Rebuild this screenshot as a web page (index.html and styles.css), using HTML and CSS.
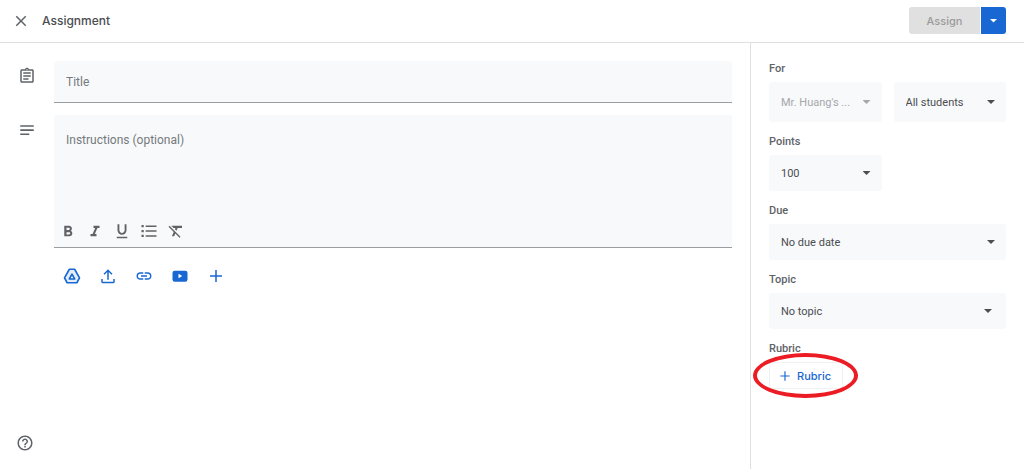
FILE: index.html
```html
<!DOCTYPE html>
<html lang="en">
<head>
  <meta charset="UTF-8">
  <meta name="viewport" content="width=device-width, initial-scale=1.0">
  <title>Assignment</title>
  <link rel="stylesheet" href="styles.css">
</head>
<body>
  <header class="topbar">
    <button class="icon-btn close" aria-label="Close">
      <svg width="18" height="18" viewBox="0 0 24 24"><path d="M19 6.41 17.59 5 12 10.59 6.41 5 5 6.41 10.59 12 5 17.59 6.41 19 12 13.41 17.59 19 19 17.59 13.41 12z"/></svg>
    </button>
    <h1 class="page-title">Assignment</h1>
    <div class="assign">
      <button class="assign-btn" disabled>Assign</button>
      <button class="assign-more" aria-label="More options"><span class="arrow"></span></button>
    </div>
  </header>

  <div class="layout">
    <main class="editor">
      <div class="row">
        <svg class="row-icon" width="18" height="18" viewBox="0 0 24 24"><path d="M7 15h7v2H7zm0-4h10v2H7zm0-4h10v2H7zm12-4h-4.18C14.4 1.84 13.3 1 12 1s-2.4.84-2.82 2H5c-1.1 0-2 .9-2 2v14c0 1.1.9 2 2 2h14c1.1 0 2-.9 2-2V5c0-1.1-.9-2-2-2zm-7-.25c.41 0 .75.34.75.75s-.34.75-.75.75-.75-.34-.75-.75.34-.75.75-.75zM19 19H5V5h14v14z"/></svg>
        <input class="field title-input" type="text" placeholder="Title" aria-label="Title">
      </div>

      <div class="row">
        <svg class="row-icon" width="18" height="18" viewBox="0 0 24 24"><path d="M3 5.500h18v2.200H3zM3 11h18v2.200H3zM3 16.500h12v2.200H3z"/></svg>
        <div class="field instructions">
          <textarea class="instructions-input" placeholder="Instructions (optional)" aria-label="Instructions (optional)"></textarea>
          <div class="toolbar">
            <button class="icon-btn" aria-label="Bold">
              <svg width="18" height="18" viewBox="0 0 24 24"><path d="M15.6 11.8c1-.7 1.6-1.8 1.6-2.8 0-2.26-1.75-4-4-4H7v14h7.04c2.09 0 3.71-1.7 3.71-3.79 0-1.52-.86-2.82-2.15-3.41zM10 7.5h3c.83 0 1.5.67 1.5 1.5s-.67 1.5-1.5 1.5h-3v-3zm3.5 9H10v-3h3.5c.83 0 1.5.67 1.5 1.5s-.67 1.5-1.5 1.5z"/></svg>
            </button>
            <button class="icon-btn" aria-label="Italic">
              <svg width="18" height="18" viewBox="0 0 24 24"><path d="M10 5v3h2.210l-3.420 8H6v3h8v-3h-2.210l3.420-8H18V5z"/></svg>
            </button>
            <button class="icon-btn" aria-label="Underline">
              <svg width="18" height="18" viewBox="0 0 24 24"><path d="M12 17c3.310 0 6-2.690 6-6V3h-2.500v8c0 1.930-1.570 3.500-3.500 3.500S8.500 12.930 8.500 11V3H6v8c0 3.310 2.690 6 6 6zM5 19.500v2h14v-2z"/></svg>
            </button>
            <button class="icon-btn" aria-label="Bulleted list">
              <svg width="18" height="18" viewBox="0 0 24 24"><path d="M2 4h3v3H2zM2 10.500h3v3H2zM2 17h3v3H2zM7.500 4.500H22v2H7.500zM7.500 11H22v2H7.500zM7.500 17.500H22v2H7.500z"/></svg>
            </button>
            <button class="icon-btn" aria-label="Remove formatting">
              <svg width="18" height="18" viewBox="0 0 24 24"><path d="M3.270 5 2 6.270l6.970 6.970L6.500 19h3l1.570-3.660L16.730 21 18 19.730 3.550 5.270 3.270 5zM6 5v.180L8.820 8h2.400l-.720 1.680 2.100 2.100L14.210 8H20V5H6z"/></svg>
            </button>
          </div>
        </div>
      </div>

      <div class="attach">
        <button class="icon-btn" aria-label="Google Drive">
          <svg width="18" height="18" viewBox="0 0 24 24"><path fill="#e3edfb" stroke="currentColor" stroke-width="2.200" stroke-linejoin="round" d="M8.500 3h7L22 14.500 18.500 21h-13L2 14.500z"/><path fill="#fff" stroke="currentColor" stroke-width="2.200" stroke-linejoin="round" d="M12 9.500 15.600 16H8.400z"/></svg>
        </button>
        <button class="icon-btn" aria-label="Upload">
          <svg width="18" height="18" viewBox="0 0 24 24"><path d="M11 17V6.800L7.400 10.400 6 9l6-6 6 6-1.400 1.400L13 6.800V17zM3 16h2v3.500h14V16h2v3.500c0 1.100-.900 2-2 2H5c-1.100 0-2-.900-2-2z"/></svg>
        </button>
        <button class="icon-btn" aria-label="Link">
          <svg width="18" height="18" viewBox="0 0 24 24"><path d="M3.900 12c0-1.710 1.390-3.100 3.100-3.100h4V7H7c-2.760 0-5 2.240-5 5s2.240 5 5 5h4v-1.900H7c-1.710 0-3.100-1.390-3.100-3.100zM8 13h8v-2H8v2zm9-6h-4v1.900h4c1.710 0 3.100 1.390 3.100 3.100s-1.390 3.100-3.100 3.100h-4V17h4c2.760 0 5-2.240 5-5s-2.240-5-5-5z"/></svg>
        </button>
        <button class="icon-btn" aria-label="YouTube">
          <svg width="18" height="18" viewBox="0 0 24 24"><rect x="2" y="5" width="20" height="14.500" rx="3"/><path fill="#fff" d="M10 9v6l5-3z"/></svg>
        </button>
        <button class="icon-btn" aria-label="Create">
          <svg width="18" height="18" viewBox="0 0 24 24"><path d="M20 13h-7v7h-2v-7H4v-2h7V4h2v7h7z"/></svg>
        </button>
      </div>

      <button class="icon-btn help" aria-label="Help">
        <svg width="18" height="18" viewBox="0 0 24 24"><path d="M11 18h2v-2h-2v2zm1-16C6.480 2 2 6.480 2 12s4.480 10 10 10 10-4.480 10-10S17.520 2 12 2zm0 18c-4.410 0-8-3.590-8-8s3.590-8 8-8 8 3.590 8 8-3.590 8-8 8zm0-14c-2.210 0-4 1.790-4 4h2c0-1.100.900-2 2-2s2 .900 2 2c0 2-3 1.750-3 5h2c0-2.250 3-2.500 3-5 0-2.210-1.790-4-4-4z"/></svg>
      </button>
    </main>

    <aside class="sidebar">
      <div class="group">
        <label class="label" for="class">For</label>
        <div class="columns">
          <div class="select tall disabled">
            <select id="class" disabled><option>Mr. Huang's ...</option></select>
          </div>
          <div class="select tall">
            <select aria-label="Students"><option>All students</option></select>
          </div>
        </div>
      </div>
      <div class="group">
        <label class="label" for="points">Points</label>
        <div class="columns">
          <div class="select">
            <select id="points"><option>100</option></select>
          </div>
        </div>
      </div>
      <div class="group">
        <label class="label" for="due">Due</label>
        <div class="select">
          <select id="due"><option>No due date</option></select>
        </div>
      </div>
      <div class="group">
        <label class="label" for="topic">Topic</label>
        <div class="select topic">
          <select id="topic"><option>No topic</option></select>
        </div>
      </div>
      <div class="group">
        <span class="label">Rubric</span>
        <div class="rubric">
          <button class="rubric-btn">
            <svg width="14" height="14" viewBox="0 0 24 24"><path d="M20 13h-7v7h-2v-7H4v-2h7V4h2v7h7z"/></svg>
            Rubric
          </button>
          <span class="highlight"></span>
        </div>
      </div>
    </aside>
  </div>
</body>
</html>
```
FILE: styles.css
```css
* {
  box-sizing: border-box;
}

body {
  margin: 0;
  min-height: 100vh;
  display: flex;
  flex-direction: column;
  background: #fff;
  color: #5f6368;
  font-family: Roboto, Arial, sans-serif;
  font-size: 12px;
}

button,
input,
select,
textarea {
  font: inherit;
  color: inherit;
  border: none;
  margin: 0;
  padding: 0;
}

svg {
  display: block;
  fill: currentColor;
}

.icon-btn {
  display: flex;
  align-items: center;
  justify-content: center;
  background: none;
  cursor: pointer;
}

/* top bar */
.topbar {
  display: flex;
  align-items: center;
  height: 43px;
  padding: 0 18px 1px 12px;
  border-bottom: 1px solid #e0e0e0;
}

.page-title {
  margin: 0 auto 0 12px;
  color: #4a4d51;
  font-family: Inter, Arial, sans-serif;
  font-size: 12px;
  font-weight: 500;
}

.assign {
  display: flex;
  gap: 1px;
  height: 27px;
}

.assign-btn {
  width: 71px;
  border-radius: 3px 0 0 3px;
  background: #e0e0e0;
  color: #9b9b9b;
  font-family: Inter, Arial, sans-serif;
  font-size: 11px;
  font-weight: 500;
}

.assign-more {
  display: flex;
  align-items: center;
  justify-content: center;
  width: 25px;
  border-radius: 0 3px 3px 0;
  background: #1967d2;
  color: #fff;
}

.arrow,
.select::after {
  width: 8px;
  height: 4px;
  background: currentColor;
  clip-path: polygon(0 0, 100% 0, 50% 100%);
}

.layout {
  flex: 1;
  display: flex;
}

/* editor */
.editor {
  flex: 1;
  display: flex;
  flex-direction: column;
  gap: 12px;
  padding: 18px 18px 17px;
}

.row {
  display: flex;
  align-items: flex-start;
  gap: 18px;
}

.row-icon {
  flex: none;
  margin-top: 6px;
}

.field {
  flex: 1;
  border-bottom: 1px solid #9a9ea3;
  border-radius: 3px 3px 0 0;
  background: #f8f9fa;
}

.field ::placeholder,
.field::placeholder {
  color: #75797e;
  opacity: 1;
}

.title-input {
  height: 42px;
  padding: 0 12px;
}

.instructions {
  display: flex;
  flex-direction: column;
}

.instructions-input {
  height: 106px;
  padding: 17px 12px;
  background: none;
  line-height: 16px;
  resize: none;
}

.toolbar {
  display: flex;
  height: 26px;
  padding-bottom: 7px;
}

.toolbar .icon-btn {
  width: 27px;
}

.attach {
  display: flex;
  gap: 18px;
  margin-top: 7px;
  padding-left: 45px;
  color: #1967d2;
}

.help {
  width: 18px;
  margin-top: auto;
  margin-left: -2px;
}

/* sidebar */
.sidebar {
  display: flex;
  flex-direction: column;
  gap: 12px;
  width: 274px;
  padding: 18px;
  border-left: 1px solid #e0e0e0;
}

.label {
  display: block;
  margin-bottom: 5px;
  font-size: 11px;
  font-weight: 500;
  line-height: 16px;
}

.columns {
  display: grid;
  grid-template-columns: 1fr 1fr;
  gap: 12px;
}

.select {
  position: relative;
  height: 36px;
  color: #4a4d51;
}

.select select {
  width: 100%;
  height: 100%;
  padding: 0 28px 0 12px;
  appearance: none;
  border-radius: 3px;
  background: #f8f9fa;
  font-size: 11px;
  opacity: 1;
}

.select::after {
  content: "";
  position: absolute;
  top: 50%;
  right: 11px;
  margin-top: -2px;
  pointer-events: none;
}

.select.tall {
  height: 40px;
}

.select.disabled {
  color: #a5a7aa;
}

.select.topic::after {
  right: 14px;
}

.rubric {
  position: relative;
  width: fit-content;
}

.rubric-btn {
  display: flex;
  align-items: center;
  gap: 5px;
  height: 27px;
  padding: 0 11px 0 8px;
  border: 1px solid #f0f1f2;
  border-radius: 3px;
  background: #fff;
  color: #1967d2;
  font-family: Inter, Arial, sans-serif;
  font-size: 11px;
  font-weight: 500;
}

/* red ring around the rubric button */
.highlight {
  position: absolute;
  inset: -9px -15px -9px -16px;
  border: 4px solid #ec1c24;
  border-radius: 50%;
  pointer-events: none;
}
```
